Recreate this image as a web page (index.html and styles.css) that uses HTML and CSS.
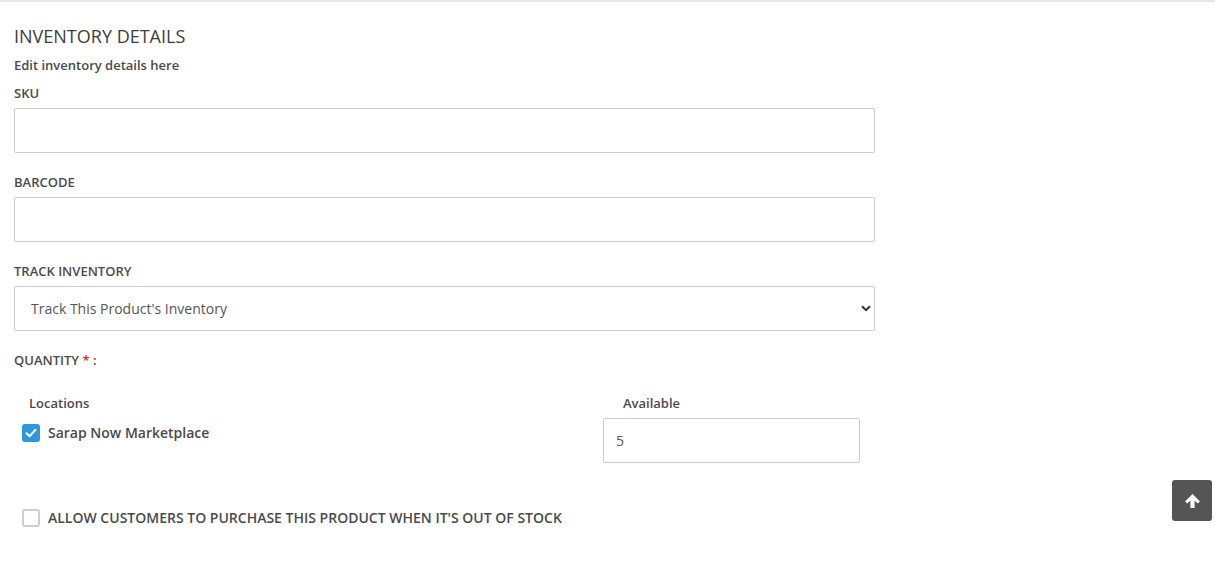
FILE: index.html
```html
<!DOCTYPE html>
<html lang="en">
<head>
<meta charset="utf-8">
<title>Inventory details</title>
<link rel="stylesheet" href="styles.css">
</head>
<body>
<div class="topbar"></div>
<main class="panel">
  <h2 class="panel-title">INVENTORY DETAILS</h2>
  <p class="panel-sub">Edit inventory details here</p>

  <div class="field">
    <label class="field-label" for="sku">SKU</label>
    <input class="text-input" id="sku" type="text">
  </div>

  <div class="field">
    <label class="field-label" for="barcode">BARCODE</label>
    <input class="text-input" id="barcode" type="text">
  </div>

  <div class="field">
    <label class="field-label" for="track">TRACK INVENTORY</label>
    <div class="select-wrap">
      <select class="select-input" id="track">
        <option>Track This Product's Inventory</option>
        <option>Don't Track Inventory</option>
      </select>
      <svg class="select-caret" width="10" height="7" viewBox="0 0 10 7"><path d="M1 1.2 L5 5.2 L9 1.2" fill="none" stroke="#333" stroke-width="2"/></svg>
    </div>
  </div>

  <div class="field-label qty-label">QUANTITY <span class="req">*</span> :</div>

  <div class="locations">
    <div class="loc-col">
      <div class="col-head loc-head">Locations</div>
      <label class="check-row">
        <span class="checkbox checked">
          <svg width="12" height="10" viewBox="0 0 12 10"><path d="M1.5 5.2 L4.6 8.2 L10.5 1.8" fill="none" stroke="#fff" stroke-width="2" stroke-linecap="round" stroke-linejoin="round"/></svg>
        </span>
        <span class="check-text">Sarap Now Marketplace</span>
      </label>
    </div>
    <div class="avail-col">
      <div class="col-head avail-head">Available</div>
      <input class="text-input qty-input" type="text" value="5">
    </div>
  </div>

  <label class="check-row oos-row">
    <span class="checkbox"></span>
    <span class="check-text">ALLOW CUSTOMERS TO PURCHASE THIS PRODUCT WHEN IT'S OUT OF STOCK</span>
  </label>
</main>

<button class="to-top" type="button" aria-label="Back to top">
  <svg width="17" height="16" viewBox="0 0 17 16"><path d="M8.5 1 L16 8.4 L13.6 10.6 L10.6 7.6 L10.6 15 L6.4 15 L6.4 7.6 L3.4 10.6 L1 8.4 Z" fill="#fff"/></svg>
</button>
</body>
</html>
```

FILE: styles.css
```css
* { box-sizing: border-box; }

html, body {
  margin: 0;
  padding: 0;
  background: #fff;
  font-family: "Open Sans", "Liberation Sans", sans-serif;
  color: #4a4a4a;
}

.topbar {
  height: 2px;
  background: #e3e7ed;
}

.panel {
  width: 875px;
  padding: 0 0 0 14px;
}

.panel-title {
  margin: 22px 0 0;
  font-size: 18px;
  line-height: 24px;
  font-weight: 400;
  color: #3d3d3d;
}

.panel-sub {
  margin: 8px 0 0;
  font-size: 13px;
  line-height: 18px;
  font-weight: 600;
  color: #4a4a4a;
}

.field {
  display: flex;
  flex-direction: column;
  margin-top: 10px;
}

.field + .field { margin-top: 20px; }

.field-label {
  display: block;
  font-size: 13px;
  line-height: 18px;
  font-weight: 600;
  color: #4a4a4a;
  margin-bottom: 6px;
}

.text-input,
.select-input {
  width: 861px;
  height: 45px;
  border: 1px solid #cbcbcb;
  border-radius: 2px;
  background: #fff;
  font-family: "Open Sans", "Liberation Sans", sans-serif;
  font-size: 14px;
  color: #555;
  padding: 0 16px;
  outline: none;
}

.select-wrap {
  position: relative;
  width: 861px;
}

.select-input {
  appearance: none;
  -webkit-appearance: none;
  display: block;
}

.select-caret {
  position: absolute;
  right: 4px;
  top: 19px;
  pointer-events: none;
}

.qty-label {
  margin-top: 20px;
  margin-bottom: 0;
}

.req { color: #c9302c; }

.locations {
  display: flex;
  margin-top: 25px;
  width: 861px;
}

.loc-col {
  width: 589px;
  display: flex;
  flex-direction: column;
}

.avail-col {
  display: flex;
  flex-direction: column;
}

.col-head {
  font-size: 13px;
  line-height: 18px;
  font-weight: 600;
  color: #4a4a4a;
}

.loc-head { padding-left: 15px; }
.avail-head { padding-left: 20px; margin-bottom: 6px; }

.qty-input {
  width: 257px;
  padding: 0 12px;
}

.check-row {
  display: flex;
  align-items: center;
  gap: 8px;
  padding-left: 8px;
}

.loc-col .check-row { margin-top: 12px; }

.checkbox {
  width: 18px;
  height: 18px;
  border-radius: 3px;
  border: 2px solid #c9ced6;
  background: #fff;
  display: flex;
  align-items: center;
  justify-content: center;
  flex: none;
}

.checkbox.checked {
  background: #2d97de;
  border-color: #2d97de;
}

.check-text {
  font-size: 14px;
  line-height: 18px;
  font-weight: 600;
  color: #4a4a4a;
}

.oos-row { margin-top: 46px; }

.to-top {
  position: fixed;
  left: 1172px;
  top: 480px;
  width: 40px;
  height: 41px;
  border: none;
  border-radius: 3px;
  background: #555;
  display: flex;
  align-items: center;
  justify-content: center;
  padding: 0;
}
```
